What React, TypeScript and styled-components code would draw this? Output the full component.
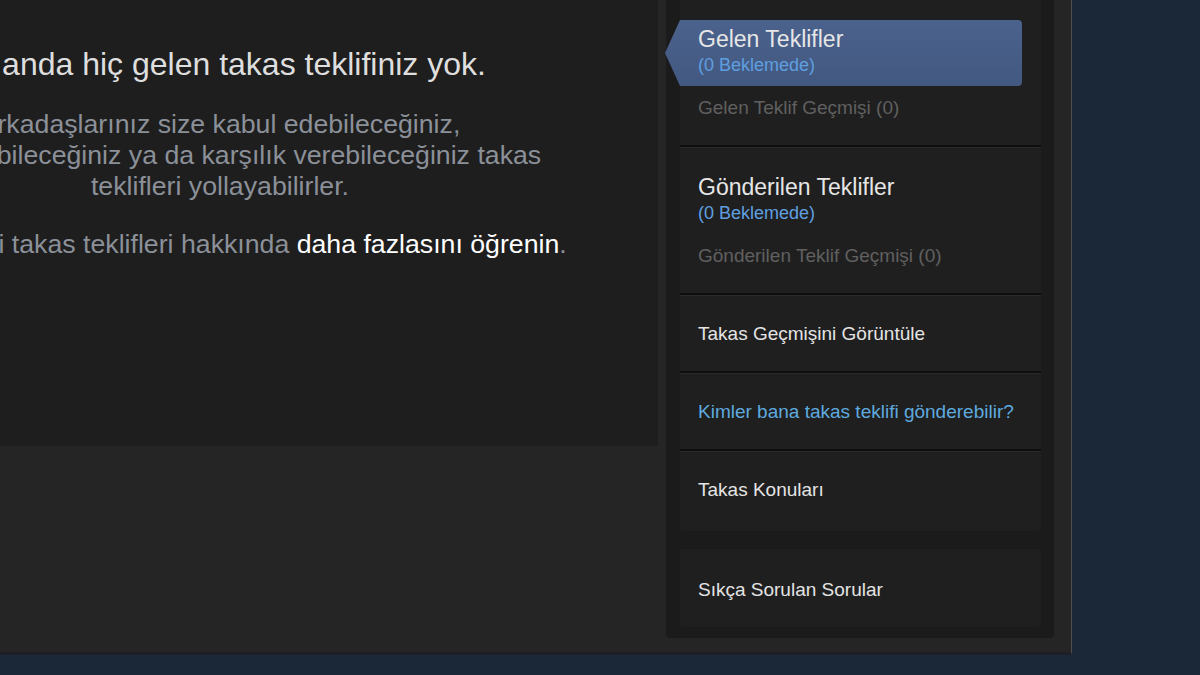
import styled, { createGlobalStyle } from 'styled-components';

const GlobalStyle = createGlobalStyle`
  html, body {
    margin: 0;
    padding: 0;
    background: #1b2838;
    overflow: hidden;
  }
  body {
    font-family: "Liberation Sans", Arial, sans-serif;
  }
`;

const Page = styled.div`
  display: flex;
  align-items: flex-start;
  width: 1071px;
  height: 652px;
  background: #252525;
  border-right: 1px solid #4f4f4f;
  border-bottom: 3px solid #1d1e26;
  overflow: hidden;
`;

const Content = styled.section`
  flex: 0 0 876px;
  margin-left: -218px;
  height: 446px;
  background: #1e1e1e;
  text-align: center;
  padding-top: 45px;
  box-sizing: border-box;
`;

const Heading = styled.h2`
  margin: 0;
  font-size: 32px;
  line-height: 38px;
  font-weight: normal;
  color: #dedede;
`;

const Text = styled.p<{ $gap: number }>`
  margin: ${(p) => p.$gap}px 0 0;
  font-size: 26.7px;
  line-height: 31px;
  color: #8b9099;
`;

const Strong = styled.a`
  color: #ffffff;
  text-decoration: none;
`;

const Sidebar = styled.aside`
  flex: 0 0 388px;
  margin-left: 8px;
  height: 638px;
  padding: 0 13px 12px 14px;
  box-sizing: border-box;
  background: #1b1b1b;
  border-radius: 0 0 4px 4px;
  display: flex;
  flex-direction: column;
  gap: 18px;
`;

const Section = styled.div`
  background: #1f1f1f;
  border-radius: 0 0 3px 3px;
  display: flex;
  flex-direction: column;
`;

const Divider = styled.div`
  height: 2px;
  background: #0e0e0e;
  border-bottom: 1px solid #2a2a2a;
`;

const OfferRow = styled.div`
  padding: 20px 0 27px;
`;

const Tab = styled.div<{ $active?: boolean }>`
  height: 66px;
  margin: 0 19px 0 -15px;
  padding: 6px 18px 0 33px;
  box-sizing: border-box;
  border-radius: 0 4px 4px 0;
  background: ${(p) =>
    p.$active ? 'linear-gradient(180deg, #4b628d 0%, #425880 100%)' : 'transparent'};
  clip-path: polygon(15px 0, 100% 0, 100% 100%, 15px 100%, 0 50%);
`;

const TabTitle = styled.div`
  font-size: 23px;
  line-height: 27px;
  color: #e6e6e6;
`;

const TabCount = styled.div`
  font-size: 18px;
  line-height: 24px;
  color: #5f9fe0;
`;

const History = styled.div`
  margin-top: 12px;
  padding-left: 18px;
  font-size: 19px;
  line-height: 20px;
  color: #606060;
`;

const LinkRow = styled.div<{ $blue?: boolean; $bottom?: number }>`
  padding: 28px 18px ${(p) => p.$bottom ?? 27}px;
  font-size: 19px;
  line-height: 20px;
  color: ${(p) => (p.$blue ? '#5eaadf' : '#e4e4e4')};
`;

const FaqRow = styled.div`
  padding: 31px 18px 27px;
  font-size: 19px;
  line-height: 20px;
  color: #e4e4e4;
`;

export default function App() {
  return (
    <>
      <GlobalStyle />
      <Page>
        <Content>
          <Heading>Şu anda hiç gelen takas teklifiniz yok.</Heading>
          <Text $gap={26}>
            Arkadaşlarınız size kabul edebileceğiniz,
            <br />
            reddedebileceğiniz ya da karşılık verebileceğiniz takas
            <br />
            teklifleri yollayabilirler.
          </Text>
          <Text $gap={27}>
            Steam'deki takas teklifleri hakkında <Strong href="#">daha fazlasını öğrenin</Strong>.
          </Text>
        </Content>

        <Sidebar>
          <Section>
            <OfferRow>
              <Tab $active>
                <TabTitle>Gelen Teklifler</TabTitle>
                <TabCount>(0 Beklemede)</TabCount>
              </Tab>
              <History>Gelen Teklif Geçmişi (0)</History>
            </OfferRow>
            <Divider />
            <OfferRow>
              <Tab>
                <TabTitle>Gönderilen Teklifler</TabTitle>
                <TabCount>(0 Beklemede)</TabCount>
              </Tab>
              <History>Gönderilen Teklif Geçmişi (0)</History>
            </OfferRow>
            <Divider />
            <LinkRow>Takas Geçmişini Görüntüle</LinkRow>
            <Divider />
            <LinkRow $blue>Kimler bana takas teklifi gönderebilir?</LinkRow>
            <Divider />
            <LinkRow $bottom={31}>Takas Konuları</LinkRow>
          </Section>
          <Section>
            <FaqRow>Sıkça Sorulan Sorular</FaqRow>
          </Section>
        </Sidebar>
      </Page>
    </>
  );
}
